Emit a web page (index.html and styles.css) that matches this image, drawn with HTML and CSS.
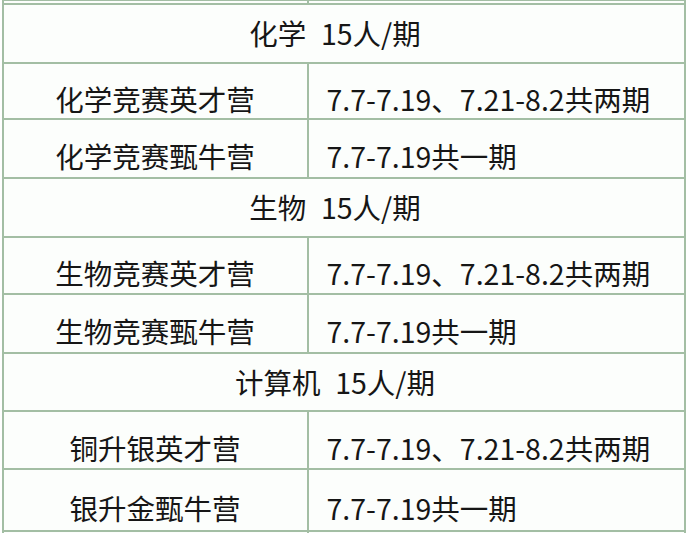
FILE: index.html
```html
<!DOCTYPE html>
<html lang="zh">
<head>
<meta charset="utf-8">
<title>课程安排</title>
<link rel="stylesheet" href="styles.css">
</head>
<body>
<table class="camp">
  <colgroup><col class="c-name"><col class="c-date"></colgroup>
  <tr class="stub"><td></td><td></td></tr>
  <tr class="head r59"><td colspan="2">化学&nbsp;&nbsp;15人/期</td></tr>
  <tr class="data r56"><td class="name">化学竞赛英才营</td><td class="date">7.7-7.19、7.21-8.2共两期</td></tr>
  <tr class="data r59"><td class="name">化学竞赛甄牛营</td><td class="date">7.7-7.19共一期</td></tr>
  <tr class="head r59"><td colspan="2">生物&nbsp;&nbsp;15人/期</td></tr>
  <tr class="data r57"><td class="name">生物竞赛英才营</td><td class="date">7.7-7.19、7.21-8.2共两期</td></tr>
  <tr class="data r59"><td class="name">生物竞赛甄牛营</td><td class="date">7.7-7.19共一期</td></tr>
  <tr class="head r58"><td colspan="2">计算机&nbsp;&nbsp;15人/期</td></tr>
  <tr class="data r58"><td class="name">铜升银英才营</td><td class="date">7.7-7.19、7.21-8.2共两期</td></tr>
  <tr class="data r62"><td class="name">银升金甄牛营</td><td class="date">7.7-7.19共一期</td></tr>
  <tr class="stub"><td></td><td></td></tr>
</table>
</body>
</html>
```

FILE: styles.css
```css
html, body {
  margin: 0;
  padding: 0;
  background: #ffffff;
  overflow: hidden;
}

body {
  font-family: "Noto Sans CJK SC", "Noto Sans", sans-serif;
  color: #161616;
}

.camp {
  border-collapse: collapse;
  table-layout: fixed;
  width: 684px;
  margin: -1px 0 0 1.5px;
  background: #fcfefc;
}

.c-name { width: 305px; }

.camp td {
  border: 2px solid #a3bea4;
  font-size: 28.5px;
  line-height: 1;
  padding: 0;
  white-space: nowrap;
}

.stub td { height: 2px; }

.head td {
  text-align: center;
  vertical-align: middle;
  padding-right: 17px;
  word-spacing: 1px;
}

.data td {
  vertical-align: middle;
  padding-top: 16px;
}

.data .name { text-align: center; }
.data .date { text-align: left; padding-left: 18px; }

.r56 { height: 56px; }
.r57 { height: 57px; }
.r58 { height: 58px; }
.r59 { height: 59px; }
.r62 { height: 62px; }
```
